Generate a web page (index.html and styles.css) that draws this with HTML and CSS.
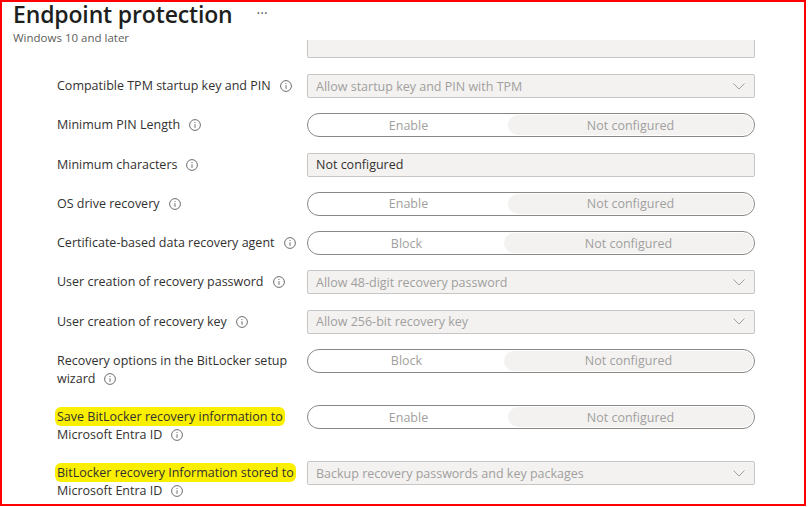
FILE: index.html
```html
<!DOCTYPE html>
<html lang="en">
<head>
<meta charset="utf-8">
<title>Endpoint protection</title>
<link rel="stylesheet" href="styles.css">
</head>
<body>
<div class="frame">
  <header class="header">
    <div class="title-row">
      <h1 class="title">Endpoint protection</h1>
      <span class="more">···</span>
    </div>
    <div class="subtitle">Windows 10 and later</div>
  </header>
  <div class="scroll">
    <div class="form">
      <div class="clipped"></div>
      <div class="rows">
        <div class="label">Compatible TPM startup key and PIN<svg class="info" viewBox="0 0 12 12"><circle cx="6" cy="6" r="5.4"/><line x1="6" y1="5.2" x2="6" y2="8.8"/><circle class="dot" cx="6" cy="3.5" r="0.55"/></svg></div>
        <div class="select"><span>Allow startup key and PIN with TPM</span><svg class="chev" viewBox="0 0 12 7"><polyline points="0.5,0.5 6,6 11.5,0.5"/></svg></div>

        <div class="label">Minimum PIN Length<svg class="info" viewBox="0 0 12 12"><circle cx="6" cy="6" r="5.4"/><line x1="6" y1="5.2" x2="6" y2="8.8"/><circle class="dot" cx="6" cy="3.5" r="0.55"/></svg></div>
        <div class="toggle"><span class="opt">Enable</span><span class="opt sel">Not configured</span></div>

        <div class="label">Minimum characters<svg class="info" viewBox="0 0 12 12"><circle cx="6" cy="6" r="5.4"/><line x1="6" y1="5.2" x2="6" y2="8.8"/><circle class="dot" cx="6" cy="3.5" r="0.55"/></svg></div>
        <div class="textbox">Not configured</div>

        <div class="label">OS drive recovery<svg class="info" viewBox="0 0 12 12"><circle cx="6" cy="6" r="5.4"/><line x1="6" y1="5.2" x2="6" y2="8.8"/><circle class="dot" cx="6" cy="3.5" r="0.55"/></svg></div>
        <div class="toggle"><span class="opt">Enable</span><span class="opt sel">Not configured</span></div>

        <div class="label">Certificate-based data recovery agent<svg class="info" viewBox="0 0 12 12"><circle cx="6" cy="6" r="5.4"/><line x1="6" y1="5.2" x2="6" y2="8.8"/><circle class="dot" cx="6" cy="3.5" r="0.55"/></svg></div>
        <div class="toggle toggle-block"><span class="opt">Block</span><span class="opt sel">Not configured</span></div>

        <div class="label">User creation of recovery password<svg class="info" viewBox="0 0 12 12"><circle cx="6" cy="6" r="5.4"/><line x1="6" y1="5.2" x2="6" y2="8.8"/><circle class="dot" cx="6" cy="3.5" r="0.55"/></svg></div>
        <div class="select"><span>Allow 48-digit recovery password</span><svg class="chev" viewBox="0 0 12 7"><polyline points="0.5,0.5 6,6 11.5,0.5"/></svg></div>

        <div class="label">User creation of recovery key<svg class="info" viewBox="0 0 12 12"><circle cx="6" cy="6" r="5.4"/><line x1="6" y1="5.2" x2="6" y2="8.8"/><circle class="dot" cx="6" cy="3.5" r="0.55"/></svg></div>
        <div class="select"><span>Allow 256-bit recovery key</span><svg class="chev" viewBox="0 0 12 7"><polyline points="0.5,0.5 6,6 11.5,0.5"/></svg></div>

        <div class="label two">Recovery options in the BitLocker setup wizard<svg class="info" viewBox="0 0 12 12"><circle cx="6" cy="6" r="5.4"/><line x1="6" y1="5.2" x2="6" y2="8.8"/><circle class="dot" cx="6" cy="3.5" r="0.55"/></svg></div>
        <div class="toggle toggle-block"><span class="opt">Block</span><span class="opt sel">Not configured</span></div>

        <div class="label two"><span class="hl">Save BitLocker recovery information to</span><br>Microsoft Entra ID<svg class="info" viewBox="0 0 12 12"><circle cx="6" cy="6" r="5.4"/><line x1="6" y1="5.2" x2="6" y2="8.8"/><circle class="dot" cx="6" cy="3.5" r="0.55"/></svg></div>
        <div class="toggle"><span class="opt">Enable</span><span class="opt sel">Not configured</span></div>

        <div class="label two"><span class="hl">BitLocker recovery Information stored to</span><br>Microsoft Entra ID<svg class="info" viewBox="0 0 12 12"><circle cx="6" cy="6" r="5.4"/><line x1="6" y1="5.2" x2="6" y2="8.8"/><circle class="dot" cx="6" cy="3.5" r="0.55"/></svg></div>
        <div class="select"><span>Backup recovery passwords and key packages</span><svg class="chev" viewBox="0 0 12 7"><polyline points="0.5,0.5 6,6 11.5,0.5"/></svg></div>
      </div>
    </div>
  </div>
</div>
</body>
</html>
```
FILE: styles.css
```css
* { box-sizing: border-box; }

html, body {
  margin: 0;
  padding: 0;
  background: #ffffff;
}

body {
  font-family: "Open Sans", "Noto Sans", "Liberation Sans", sans-serif;
  color: #323130;
}

.frame {
  width: 806px;
  height: 506px;
  border: 2px solid #ff0000;
  display: flex;
  flex-direction: column;
}

.header {
  padding-left: 11px;
  height: 38px;
  flex: none;
}

.title-row {
  display: flex;
  align-items: center;
  gap: 24px;
  height: 24px;
}

.title {
  margin: 0;
  font-size: 23px;
  font-weight: 600;
  line-height: 24px;
  color: #201f1e;
  letter-spacing: -0.15px;
}

.more {
  font-size: 14px;
  color: #605e5c;
  line-height: 24px;
  margin-top: -2px;
}

.subtitle {
  font-size: 11.5px;
  line-height: 14px;
  color: #605e5c;
  margin-top: 5px;
}

.scroll {
  flex: 1;
  overflow: hidden;
}

.form {
  padding-left: 55px;
}

.clipped {
  margin-left: 250px;
  width: 448px;
  height: 18px;
  background: #f3f2f1;
  border: 1px solid #c8c6c4;
  border-top: none;
  border-radius: 0 0 2px 2px;
  margin-bottom: 16px;
}

.rows {
  display: grid;
  grid-template-columns: 240px 448px;
  column-gap: 10px;
  row-gap: 15.25px;
  align-items: start;
}

.label {
  font-size: 12.5px;
  line-height: 18px;
  padding-top: 3px;
  color: #323130;
}

.label.two {
  padding-bottom: 2px;
}

.info {
  display: inline-block;
  width: 12px;
  height: 12px;
  margin-left: 9px;
  vertical-align: -2px;
  fill: none;
  stroke: #605e5c;
  stroke-width: 0.9;
}

.info .dot {
  fill: #605e5c;
  stroke: none;
}

.hl {
  background: #fbef00;
  border-radius: 6px;
  padding: 1px 2px;
  margin-left: -2px;
}

.select, .textbox {
  height: 24px;
  background: #f3f2f1;
  border: 1px solid #c8c6c4;
  border-radius: 2px;
  display: flex;
  align-items: center;
  padding: 0 8px;
  font-size: 12.5px;
}

.select {
  justify-content: space-between;
  color: #a19f9d;
}

.textbox {
  color: #323130;
}

.chev {
  width: 12px;
  height: 7px;
  margin-right: 1px;
  fill: none;
  stroke: #a19f9d;
  stroke-width: 1;
}

.toggle {
  height: 24px;
  border: 1px solid #8a8886;
  border-radius: 12px;
  display: grid;
  grid-template-columns: 199px 1fr;
  padding: 1px;
  font-size: 12.5px;
  color: #a19f9d;
}

.toggle-block {
  grid-template-columns: 195px 1fr;
}

.opt {
  display: flex;
  align-items: center;
  justify-content: center;
  border-radius: 11px;
}

.opt.sel {
  background: #f3f2f1;
}
```
